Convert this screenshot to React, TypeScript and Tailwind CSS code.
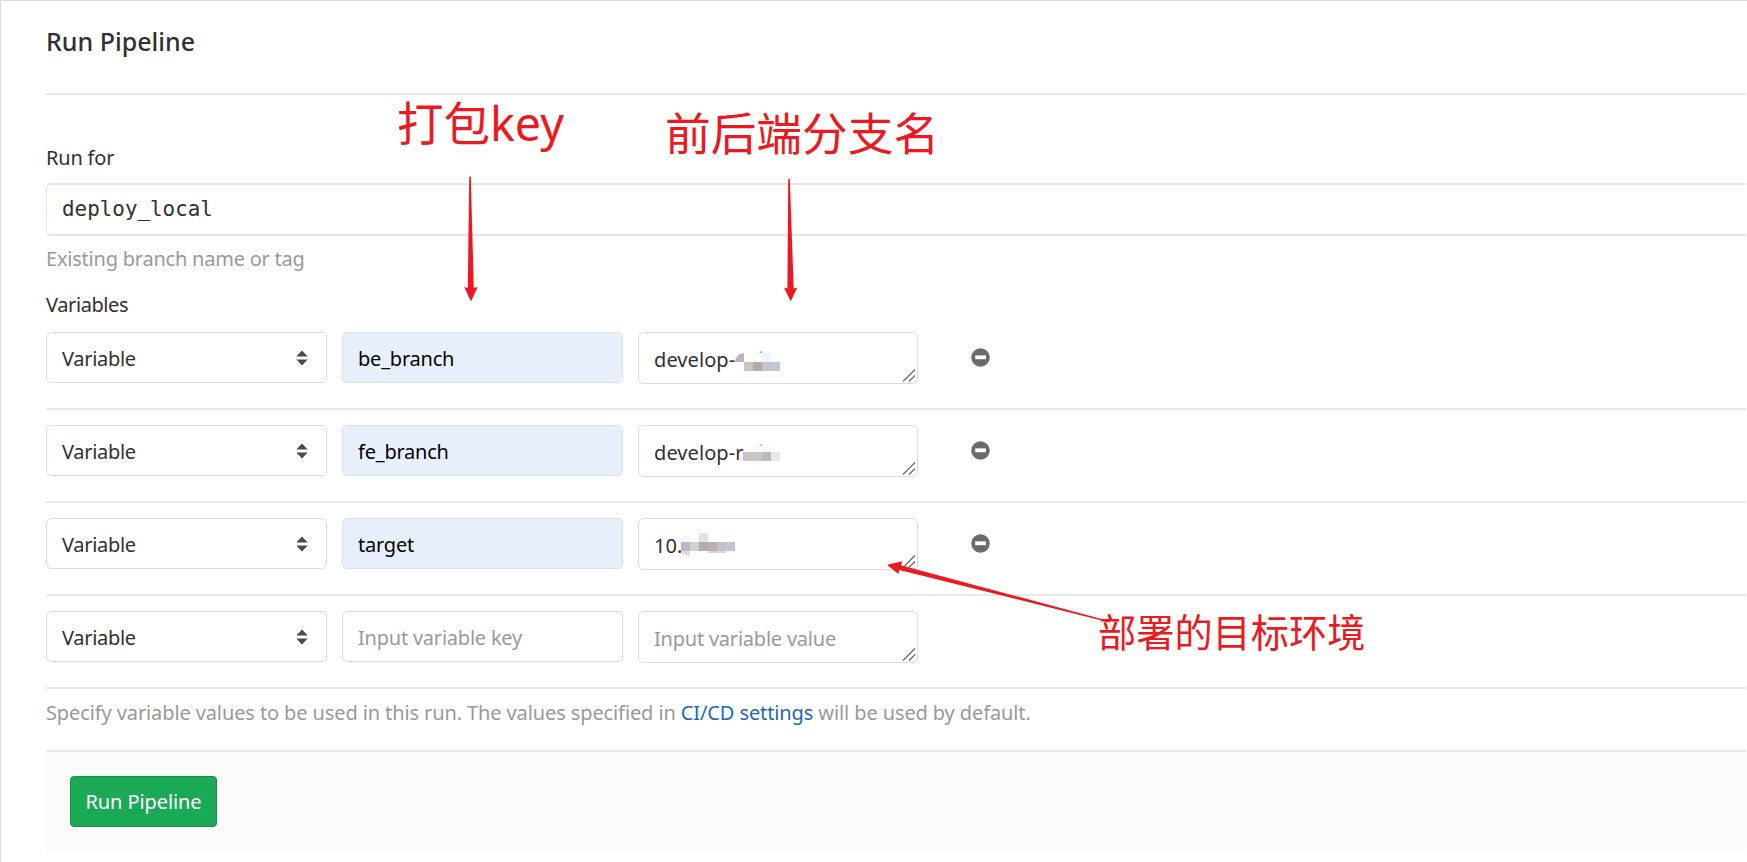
import React from "react";

type Cell = { d: string; c: string };

type Row = { key?: string; value?: string; cells?: Cell[] };

const rows: Row[] = [
  {
    key: "be_branch",
    value: "develop-",
    cells: [
      { d: "M97 30a9 9 0 0 1 9-9v9z", c: "#bdb3b8" },
      { d: "M106 21h9v9h-9z", c: "#fdfdfd" },
      { d: "M115 21h9v9h-9z", c: "#fcfcfb" },
      { d: "M124 21h9v9h-9z", c: "#edf5fa" },
      { d: "M106 30h9v9h-9z", c: "#d0c2b8" },
      { d: "M115 30h9v9h-9z", c: "#b3aaa9" },
      { d: "M124 30h9v9h-9z", c: "#c3c4cc" },
      { d: "M133 30h9v9h-9z", c: "#c3c8cf" },
      { d: "M121 20.500l1-1h2v1.500z", c: "#999" },
    ],
  },
  {
    key: "fe_branch",
    value: "develop-r",
    cells: [
      { d: "M115 20h18v7h-18z", c: "#faf9f7" },
      { d: "M105 27h10v9h-10z", c: "#cdbfca" },
      { d: "M115 27h9v9h-9z", c: "#c7c7c7" },
      { d: "M124 27h9v9h-9z", c: "#b9b9b9" },
      { d: "M133 27h9v9h-9z", c: "#e2e8ed" },
      { d: "M115 36h9v4h-9z", c: "#f6fbff" },
      { d: "M121 20.500l1-1h2v1z", c: "#999" },
    ],
  },
  {
    key: "target",
    value: "10.",
    cells: [
      { d: "M43 24a9 7 0 0 1 9-7v7z", c: "#fbf4ef" },
      { d: "M61 15h9v9h-9z", c: "#dbe5ec" },
      { d: "M43 24h9v9h-9z", c: "#c1b3c5" },
      { d: "M43 33h9v5a9 5 0 0 1-9-5z", c: "#e0d8e3" },
      { d: "M52 24h9v9h-9z", c: "#cbd3ce" },
      { d: "M61 24h9v9h-9z", c: "#bba8aa" },
      { d: "M70 24h9v9h-9z", c: "#b3b1ac" },
      { d: "M79 24h9v9h-9z", c: "#c3c2cc" },
      { d: "M88 24h9v9h-9z", c: "#c0c8d4" },
      { d: "M70 33h18v2h-18z", c: "#d9d7d0" },
    ],
  },
  {},
];

function Select() {
  return (
    <div className="flex h-[51px] w-[281px] items-center justify-between rounded-[5px] border border-[#dcdcdc] pr-[18px] pl-[15px]">
      <span className="pt-[3px] tracking-[-0.3px]">Variable</span>
      <svg width="12" height="16" viewBox="0 0 12 16" fill="#4a4a4a">
        <path d="M0.3 6.6 6 0.4l5.7 6.2zM0.3 9.400h11.400L6 15.600z" />
      </svg>
    </div>
  );
}

function KeyInput({ value }: { value?: string }) {
  return value ? (
    <div className="flex h-[51px] w-[281px] items-center rounded-[5px] border border-[#dcdee2] bg-[#e8f0fe] pl-[15px] text-black">
      <span className="pt-[3px] tracking-[-0.22px]">{value}</span>
    </div>
  ) : (
    <div className="flex h-[51px] w-[281px] items-center rounded-[5px] border border-[#dcdcdc] pl-[15px] text-[#999]">
      <span className="pt-[3px] tracking-[-0.22px]">Input variable key</span>
    </div>
  );
}

function ValueInput({ value, cells = [] }: { value?: string; cells?: Cell[] }) {
  return (
    <div className="relative flex h-[52px] w-[280px] items-center rounded-[5px] border border-[#dcdcdc] pl-[15px]">
      <span className={value ? "pt-[3px] tracking-[0.08px]" : "pt-[3px] tracking-[-0.22px] text-[#999]"}>
        {value ?? "Input variable value"}
      </span>
      <svg className="absolute -top-px -left-px" width="280" height="52">
        {cells.map((c, i) => (
          <path key={i} d={c.d} fill={c.c} />
        ))}
        <path d="M265 49.500 277 37.500M271 49.500l6-6" stroke="#6a6a6a" strokeWidth="1.2" fill="none" />
      </svg>
    </div>
  );
}

function MinusIcon() {
  return (
    <svg className="mt-4 ml-[53px]" width="19" height="19" viewBox="0 0 19 19">
      <circle cx="9.5" cy="9.5" r="9.3" fill="#6b6b6b" />
      <rect x="4.2" y="7.4" width="10.800" height="3.800" fill="#fff" />
    </svg>
  );
}

function Annotations() {
  return (
    <div className="pointer-events-none absolute -top-px -left-px h-[862px] w-[1747px] whitespace-nowrap font-['Noto_Sans','Noto_Sans_CJK_SC',sans-serif] text-[#ee1820]">
      <span className="absolute top-[89px] left-[397px] text-[46.5px] leading-[68px]">打包key</span>
      <span className="absolute top-[99px] left-[665px] text-[45.7px] leading-[68px]">前后端分支名</span>
      <span className="absolute top-[604px] left-[1098px] text-[38.2px] leading-[56px]">部署的目标环境</span>
      <svg className="absolute inset-0" width="1747" height="862" fill="#ee1820">
        <path d="M469.200 176.500h1.600L473.800 288l3.800-1L471 301.500 464.200 287l3.600 1z" />
        <path d="M788.200 179h1.600L793.700 288.500l3.600-1L790.700 301.500 784 287.500l3.400 1z" />
        <path d="M887 564.700 902.200 561.300 900.800 565.200 1110 621.300 1109.600 622.500 899.300 569.900 898.300 573.900z" />
      </svg>
    </div>
  );
}

export default function App() {
  return (
    <div className="relative h-[862px] w-[1747px] overflow-hidden border-t border-l border-[#dcdcdc] bg-white pr-px pl-[45px] font-['Noto_Sans',sans-serif] text-[20px] leading-7 text-[#303030]">
      <h1 className="h-[92px] pt-6 text-[25px] leading-8 font-medium">Run Pipeline</h1>
      <div className="h-0.5 bg-[#e6e6e6]" />
      <div className="pt-[49px] tracking-[-0.2px]">Run for</div>
      <div className="mt-[11px] flex h-[53px] items-center rounded-l-[5px] border-y-2 border-l border-[#e6e6e6] pb-0.5 pl-[15px] font-['DejaVu_Sans_Mono',monospace] text-[20.9px]">
        deploy_local
      </div>
      <div className="mt-[9px] tracking-[-0.22px] text-[#999]">Existing branch name or tag</div>
      <div className="mt-[18px] tracking-[-0.4px]">Variables</div>
      <div className="mt-[13px]">
        {rows.map((r, i) => (
          <div key={i} className="mb-[15px] flex h-[78px] items-start border-b-2 border-[#e8e8e8] last:mb-0">
            <Select />
            <div className="ml-[15px]">
              <KeyInput value={r.key} />
            </div>
            <div className="ml-[15px]">
              <ValueInput value={r.value} cells={r.cells} />
            </div>
            {r.key && <MinusIcon />}
          </div>
        ))}
      </div>
      <p className="mt-[10px] tracking-[-0.11px] text-[#999]">
        Specify variable values to be used in this run. The values specified in{" "}
        <a className="text-[#1b69b6]">CI/CD settings</a> will be used by default.
      </p>
      <div className="mt-[23px] h-[101px] border-t-2 border-[#e8e8e8] bg-[#fafafa] pt-6 pl-6">
        <button className="h-[51px] w-[147px] rounded-[4px] border border-[#168f48] bg-[#1aaa55] tracking-[-0.1px] text-white">
          Run Pipeline
        </button>
      </div>
      <Annotations />
    </div>
  );
}
